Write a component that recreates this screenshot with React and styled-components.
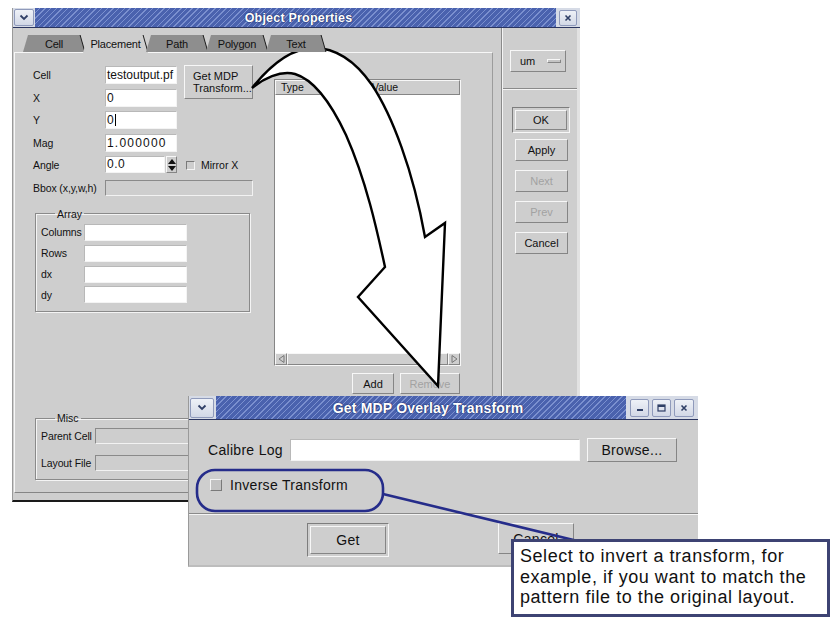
import React from 'react';
import styled, { createGlobalStyle, css } from 'styled-components';

const GlobalStyle = createGlobalStyle`
  html, body {
    margin: 0;
    padding: 0;
    background: #ffffff;
  }
  body {
    font-family: "Liberation Sans", Arial, sans-serif;
  }
`;

const raised = css`
  border: 1px solid;
  border-color: #f7f7f7 #858585 #858585 #f7f7f7;
`;

const sunken = css`
  border: 1px solid;
  border-color: #858585 #f7f7f7 #f7f7f7 #858585;
`;

const Canvas = styled.div`
  position: relative;
  width: 840px;
  height: 632px;
  overflow: hidden;
  background: #ffffff;
`;

/* windows sit on the canvas like windows on a desktop */
const Window = styled.div`
  position: absolute;
  left: ${p => p.$x}px;
  top: ${p => p.$y}px;
  width: ${p => p.$w}px;
  height: ${p => p.$h}px;
  box-sizing: border-box;
  background: #cecece;
  display: flex;
  flex-direction: column;
  color: #111;
  font-size: ${p => p.$font}px;
  letter-spacing: ${p => p.$spacing || 0}px;
  border-left: 1px solid #9a9a9a;
  border-bottom: 2px solid ${p => p.$edge || '#9a9a9a'};
`;

const TitleBar = styled.div`
  flex: none;
  height: ${p => p.$h}px;
  display: flex;
  align-items: center;
  background: #d6dbe6;
  border-bottom: 1px solid #2a3560;
`;

const Hatch = styled.div`
  flex: 1;
  align-self: stretch;
  display: flex;
  align-items: center;
  justify-content: center;
  margin-left: ${p => p.$ml || 0}px;
  margin-right: ${p => p.$mr || 0}px;
  background: repeating-linear-gradient(135deg, #4a62ae 0 3px, #7b90cf 3px 4px);
`;

const Title = styled.span`
  color: #ffffff;
  font-weight: bold;
  font-size: ${p => p.$size}px;
  letter-spacing: 0.2px;
  text-shadow: 0 0 2px #1d2b66, 0 0 1px #1d2b66;
  margin-left: ${p => p.$offset || 0}px;
`;

const TitleButton = styled.div`
  flex: none;
  width: ${p => p.$w}px;
  height: ${p => p.$h}px;
  margin-left: ${p => p.$ml || 0}px;
  box-sizing: border-box;
  display: flex;
  align-items: center;
  justify-content: center;
  background: linear-gradient(#eef1f7, #d2d8e6);
  border: 1px solid #8f9abb;
  border-radius: 2px;
`;

const Chevron = () => (
  <svg width="10" height="7" viewBox="0 0 10 7">
    <polyline points="1.5,1.5 5,5 8.5,1.5" fill="none" stroke="#2f3f66" strokeWidth="1.8" />
  </svg>
);

const CloseGlyph = () => (
  <svg width="8" height="8" viewBox="0 0 8 8">
    <path d="M1.5 1.5 L6.5 6.5 M6.5 1.5 L1.5 6.5" stroke="#2f3f66" strokeWidth="1.6" />
  </svg>
);

const MinGlyph = () => (
  <svg width="8" height="8" viewBox="0 0 8 8">
    <rect x="1" y="5" width="6" height="2" fill="#2f3f66" />
  </svg>
);

const MaxGlyph = () => (
  <svg width="9" height="8" viewBox="0 0 9 8">
    <rect x="1" y="1" width="7" height="6" fill="none" stroke="#2f3f66" strokeWidth="1.2" />
    <rect x="1" y="1" width="7" height="2" fill="#2f3f66" />
  </svg>
);

/* ---------- main window ---------- */

const MainBody = styled.div`
  flex: 1;
  display: flex;
  min-height: 0;
`;

const LeftArea = styled.div`
  width: 480px;
  display: flex;
  flex-direction: column;
  padding: 7px 0 7px 1px;
  box-sizing: border-box;
`;

const Tabs = styled.div`
  display: flex;
  height: 17px;
  padding-left: 9px;
  position: relative;
  z-index: 1;
`;

const Tab = styled.div`
  position: relative;
  width: ${p => p.$w}px;
  height: ${p => (p.$active ? 18 : 17)}px;
  margin-right: -2px;
  display: flex;
  align-items: center;
  justify-content: center;
  font-size: 11px;
  letter-spacing: -0.2px;
  color: #111;

  &::before {
    content: '';
    position: absolute;
    inset: 0;
    background: ${p => (p.$active ? '#cecece' : '#8e8e8e')};
    clip-path: polygon(5px 0, calc(100% - 5px) 0, 100% 100%, 0 100%);
  }

  &::after {
    content: '';
    position: absolute;
    right: 2px;
    top: 0;
    height: 17px;
    width: 1.4px;
    background: #1e1e1e;
    transform: skewX(16deg);
  }

  span {
    position: relative;
  }
`;

const Panel = styled.div`
  flex: 1;
  display: flex;
  ${raised};
  border-right-color: #9c9c9c;
  padding-top: 13px;
  min-height: 0;
`;

const FormCol = styled.div`
  width: 241px;
  padding: 0 0 12px 18px;
  display: flex;
  flex-direction: column;
`;

const FormGrid = styled.div`
  display: grid;
  grid-template-columns: 72px 72px 7px 69px;
  grid-auto-rows: 18px;
  row-gap: 4.6px;
  align-items: center;
`;

const Label = styled.div`
  font-size: 10.5px;
  letter-spacing: -0.1px;
  white-space: nowrap;
  grid-column: ${p => p.$col || 'auto'};
`;

const Input = styled.div`
  box-sizing: border-box;
  height: ${p => p.$h || 18}px;
  width: ${p => (p.$w ? `${p.$w}px` : 'auto')};
  background: ${p => (p.$disabled ? '#cecece' : '#ffffff')};
  ${sunken};
  border-color: ${p => (p.$disabled ? '#8a8a8a #f2f2f2 #f2f2f2 #8a8a8a' : '#b8b8b8 #f4f4f4 #f4f4f4 #b8b8b8')};
  font-size: 12px;
  letter-spacing: ${p => p.$track ?? 0.5}px;
  line-height: ${p => (p.$h || 18) - 2}px;
  padding-left: 1px;
  white-space: nowrap;
  overflow: hidden;
  grid-column: ${p => p.$span || 'auto'};
`;

const Caret = styled.span`
  display: inline-block;
  width: 1px;
  height: 12px;
  background: #000;
  vertical-align: -2px;
  margin-left: 1px;
`;

const Button = styled.div`
  box-sizing: border-box;
  width: ${p => p.$w}px;
  height: ${p => p.$h}px;
  ${raised};
  display: flex;
  align-items: center;
  justify-content: ${p => (p.$left ? 'flex-start' : 'center')};
  text-align: left;
  padding-left: ${p => (p.$left ? 8 : 0)}px;
  font-size: ${p => p.$size || 11}px;
  line-height: 12px;
  color: ${p => (p.$disabled ? '#a2a2a2' : '#111')};
  background: #cecece;
  flex: none;
`;

const GetMdpButton = styled(Button)`
  grid-column: 4;
  grid-row: 1 / span 2;
  align-self: start;
  margin-top: -1px;
`;

const AngleCell = styled.div`
  grid-column: 2;
  display: flex;
  height: 18px;
`;

const Spinner = styled.div`
  width: 11px;
  height: 17px;
  margin-left: 1px;
  display: flex;
  flex-direction: column;
  ${raised};
  box-sizing: border-box;
  align-items: center;
  justify-content: space-around;
`;

const MirrorCell = styled.div`
  grid-column: 4;
  display: flex;
  align-items: center;
  padding-left: 2px;
  gap: 6px;
  font-size: 10.5px;
`;

const CheckBox = styled.div`
  flex: none;
  width: ${p => p.$size}px;
  height: ${p => p.$size}px;
  box-sizing: border-box;
  background: ${p => p.$fill || '#cecece'};
  border: 1px solid;
  border-color: ${p => (p.$up ? '#f4f4f4 #7a7a7a #7a7a7a #f4f4f4' : '#7a7a7a #f4f4f4 #f4f4f4 #7a7a7a')};
`;

const Group = styled.fieldset`
  margin: ${p => p.$mt || '0'} 0 0 2px;
  width: 215px;
  box-sizing: border-box;
  min-inline-size: 0;
  padding: 3px 0 ${p => p.$pb}px 5px;
  border: 1px solid #8a8a8a;
  box-shadow: inset 1px 1px 0 #f4f4f4, 1px 1px 0 #f4f4f4;

  legend {
    margin-left: 14px;
    padding: 0 2px;
    font-size: 10.5px;
    line-height: 14px;
  }
`;

const GroupGrid = styled.div`
  display: grid;
  grid-template-columns: ${p => p.$cols};
  grid-auto-rows: ${p => p.$row}px;
  row-gap: ${p => p.$gap}px;
  align-items: center;
`;

const TableCol = styled.div`
  width: 187px;
  padding-top: 13px;
  display: flex;
  flex-direction: column;
`;

const Table = styled.div`
  height: 287px;
  box-sizing: border-box;
  ${sunken};
  display: flex;
  flex-direction: column;
  background: #ffffff;
`;

const TableHead = styled.div`
  display: flex;
  height: 15px;
  flex: none;
`;

const HeadCell = styled.div`
  box-sizing: border-box;
  width: ${p => (p.$w ? `${p.$w}px` : 'auto')};
  flex: ${p => (p.$w ? 'none' : 1)};
  ${raised};
  background: #cecece;
  font-size: 10.5px;
  line-height: 13px;
  padding-left: 5px;
`;

const TableBody = styled.div`
  flex: 1;
  background: #ffffff;
`;

const ScrollBar = styled.div`
  height: 12px;
  flex: none;
  display: flex;
  background: #bdbdbd;
`;

const ScrollArrow = styled.div`
  width: 12px;
  height: 12px;
  box-sizing: border-box;
  ${raised};
  background: #cecece;
  display: flex;
  align-items: center;
  justify-content: center;
`;

const ScrollThumb = styled.div`
  flex: 1;
  ${raised};
  background: #cecece;
`;

const ButtonRow = styled.div`
  display: flex;
  justify-content: flex-end;
  gap: 6px;
  margin-top: 7px;
  padding-right: 1px;
`;

const Divider = styled.div`
  width: 10px;
  display: flex;
  justify-content: flex-end;

  &::after {
    content: '';
    width: 1px;
    border-left: 1px solid #8a8a8a;
    background: #f4f4f4;
  }
`;

const RightCol = styled.div`
  flex: 1;
  display: flex;
  flex-direction: column;
  padding-top: 22px;
  border-right: 3px solid #e2e2e2;
`;

const OptionMenu = styled.div`
  margin-left: 7px;
  width: 56px;
  height: 22px;
  box-sizing: border-box;
  ${raised};
  display: flex;
  align-items: center;
  padding-left: 9px;
  font-size: 11px;
`;

const OptionMark = styled.div`
  margin-left: auto;
  margin-right: 4px;
  width: 14px;
  height: 4px;
  box-sizing: border-box;
  ${raised};
  background: #c4c4c4;
`;

const HLine = styled.div`
  height: 0;
  border-top: 1px solid #8a8a8a;
  border-bottom: 1px solid #f4f4f4;
  margin-top: ${p => p.$mt}px;
`;

const DefaultRing = styled.div`
  margin: ${p => p.$m};
  width: ${p => p.$w}px;
  height: ${p => p.$h}px;
  box-sizing: border-box;
  ${sunken};
  border-color: #7d7d7d #f7f7f7 #f7f7f7 #7d7d7d;
  padding: 2px;
  display: flex;
`;

const SideButtons = styled.div`
  display: flex;
  flex-direction: column;
  gap: 9px;
  margin: 6px 0 0 12px;
`;

/* ---------- transform dialog ---------- */

const DialogRow = styled.div`
  display: flex;
  align-items: center;
  padding: ${p => p.$pad};
`;

const DialogLabel = styled.div`
  width: ${p => p.$w}px;
  flex: none;
`;

const DialogFooter = styled.div`
  flex: 1;
  display: flex;
  align-items: flex-start;
  padding: 8px 0 0 118px;
  gap: 109px;
`;

/* ---------- annotations ---------- */

const Overlay = styled.svg`
  position: absolute;
  left: 0;
  top: 0;
  pointer-events: none;
`;

const Callout = styled.div`
  position: absolute;
  left: 511px;
  top: 539px;
  width: 319px;
  height: 78px;
  box-sizing: border-box;
  background: #ffffff;
  border: 3px solid #3d4373;
  padding: 4px 0 0 6px;
  font-family: "Liberation Sans", Arial, sans-serif;
  font-size: 18px;
  letter-spacing: 0.55px;
  line-height: 20.5px;
  color: #111;
`;

const TriLeft = () => (
  <svg width="7" height="8" viewBox="0 0 7 8">
    <polygon points="6,0.5 6,7.5 1,4" fill="none" stroke="#777" strokeWidth="1" />
  </svg>
);

const TriRight = () => (
  <svg width="7" height="8" viewBox="0 0 7 8">
    <polygon points="1,0.5 1,7.5 6,4" fill="none" stroke="#777" strokeWidth="1" />
  </svg>
);

const SpinUp = () => (
  <svg width="8" height="5" viewBox="0 0 8 5"><polygon points="0,5 8,5 4,0" fill="#111" /></svg>
);

const SpinDown = () => (
  <svg width="8" height="5" viewBox="0 0 8 5"><polygon points="0,0 8,0 4,5" fill="#111" /></svg>
);

const tabs = [
  { name: 'Cell', w: 62 },
  { name: 'Placement', w: 65, active: true },
  { name: 'Path', w: 62 },
  { name: 'Polygon', w: 62 },
  { name: 'Text', w: 60 },
];

const fields = [
  { label: 'Cell', value: 'testoutput.pf', track: 0 },
  { label: 'X', value: '0' },
  { label: 'Y', value: '0', caret: true },
  { label: 'Mag', value: '1.000000', track: 1.2 },
];

const arrayRows = ['Columns', 'Rows', 'dx', 'dy'];

const sideButtons = [
  { label: 'Apply' },
  { label: 'Next', disabled: true },
  { label: 'Prev', disabled: true },
  { label: 'Cancel' },
];

const ObjectProperties = () => (
  <Window $x={12} $y={8} $w={568} $h={494} $font={11} $edge="#1a1a1a">
    <TitleBar $h={19}>
      <TitleButton $w={20} $h={17} $ml={1}><Chevron /></TitleButton>
      <Hatch $ml={1} $mr={3}>
        <Title $size={12.5} $offset={6}>Object Properties</Title>
      </Hatch>
      <TitleButton $w={18} $h={16}><CloseGlyph /></TitleButton>
      <div style={{ width: 3 }} />
    </TitleBar>
    <MainBody>
      <LeftArea>
        <Tabs>
          {tabs.map(t => (
            <Tab key={t.name} $w={t.w} $active={t.active}><span>{t.name}</span></Tab>
          ))}
        </Tabs>
        <Panel>
          <FormCol>
            <FormGrid>
              {fields.map((f, i) => (
                <React.Fragment key={f.label}>
                  <Label $col={1}>{f.label}</Label>
                  <Input $span={2} $track={f.track}>{f.value}{f.caret && <Caret />}</Input>
                  {i === 0 && (
                    <GetMdpButton $w={69} $h={34} $left>Get MDP<br />Transform...</GetMdpButton>
                  )}
                </React.Fragment>
              ))}
              <Label $col={1}>Angle</Label>
              <AngleCell>
                <Input $w={60} $h={17}>0.0</Input>
                <Spinner><SpinUp /><SpinDown /></Spinner>
              </AngleCell>
              <MirrorCell>
                <CheckBox $size={9} />
                Mirror X
              </MirrorCell>
              <Label $col={1}>Bbox (x,y,w,h)</Label>
              <Input $span="2 / span 3" $h={16} $disabled />
            </FormGrid>

            <Group $mt="10px" $pb={8}>
              <legend>Array</legend>
              <GroupGrid $cols="43px 103px" $row={17} $gap={3.8}>
                {arrayRows.map(r => (
                  <React.Fragment key={r}>
                    <Label>{r}</Label>
                    <Input $h={17} />
                  </React.Fragment>
                ))}
              </GroupGrid>
            </Group>

            <Group $mt="auto" $pb={8}>
              <legend>Misc</legend>
              <GroupGrid $cols="54px 150px" $row={16} $gap={11}>
                <Label>Parent Cell</Label>
                <Input $h={16} $disabled />
                <Label>Layout File</Label>
                <Input $h={16} $disabled />
              </GroupGrid>
            </Group>
          </FormCol>

          <TableCol>
            <Table>
              <TableHead>
                <HeadCell $w={91}>Type</HeadCell>
                <HeadCell>Value</HeadCell>
              </TableHead>
              <TableBody />
              <ScrollBar>
                <ScrollArrow><TriLeft /></ScrollArrow>
                <ScrollThumb />
                <ScrollArrow><TriRight /></ScrollArrow>
              </ScrollBar>
            </Table>
            <ButtonRow>
              <Button $w={42} $h={21}>Add</Button>
              <Button $w={60} $h={21} $disabled>Remove</Button>
            </ButtonRow>
          </TableCol>
        </Panel>
      </LeftArea>
      <Divider />
      <RightCol>
        <OptionMenu>
          um
          <OptionMark />
        </OptionMenu>
        <HLine $mt={16} />
        <DefaultRing $m="17px 0 0 9px" $w={58} $h={26}>
          <Button $w={52} $h={20}>OK</Button>
        </DefaultRing>
        <SideButtons>
          {sideButtons.map(b => (
            <Button key={b.label} $w={53} $h={22} $disabled={b.disabled}>{b.label}</Button>
          ))}
        </SideButtons>
      </RightCol>
    </MainBody>
  </Window>
);

const TransformDialog = () => (
  <Window $x={188} $y={396} $w={510} $h={171} $font={14} $spacing={0.3} $edge="#bdbdbd">
    <TitleBar $h={23}>
      <TitleButton $w={24} $h={20} $ml={1}><Chevron /></TitleButton>
      <Hatch $ml={2} $mr={4}>
        <Title $size={14} $offset={14}>Get MDP Overlay Transform</Title>
      </Hatch>
      <TitleButton $w={19} $h={18}><MinGlyph /></TitleButton>
      <TitleButton $w={19} $h={18} $ml={3}><MaxGlyph /></TitleButton>
      <TitleButton $w={20} $h={18} $ml={3}><CloseGlyph /></TitleButton>
      <div style={{ width: 4 }} />
    </TitleBar>
    <DialogRow $pad="18px 0 0 19px">
      <DialogLabel $w={82}>Calibre Log</DialogLabel>
      <Input $w={290} $h={22} />
      <Button $w={90} $h={24} $size={14} style={{ marginLeft: 7 }}>Browse...</Button>
    </DialogRow>
    <DialogRow $pad="15px 0 0 21px">
      <CheckBox $size={12} $up $fill="#c2c2c2" />
      <span style={{ marginLeft: 8 }}>Inverse Transform</span>
    </DialogRow>
    <HLine $mt={20} />
    <DialogFooter>
      <DefaultRing $m="0" $w={82} $h={34}>
        <Button $w={76} $h={28} $size={14}>Get</Button>
      </DefaultRing>
      <Button $w={76} $h={31} $size={14}>Cancel</Button>
    </DialogFooter>
  </Window>
);

const Arrow = () => (
  <Overlay width="840" height="632" viewBox="0 0 840 632">
    <path
      d="M252 88 C268 68 290 48 314 48 C338 48 356 62 372 85 C392 115 413 170 425 237 L445 223 L438 386 L358 297 L385 267 C377 230 366 180 346 135 C331 103 315 80 295 74 C280 70 263 79 252 88 Z"
      fill="#ffffff"
      stroke="#000000"
      strokeWidth="2.4"
      strokeLinejoin="miter"
    />
  </Overlay>
);

const Highlight = () => (
  <Overlay width="840" height="632" viewBox="0 0 840 632">
    <rect x="197" y="470" width="186" height="41" rx="18" ry="18" fill="none" stroke="#252c8a" strokeWidth="2.6" />
    <line x1="383" y1="494" x2="590" y2="544" stroke="#252c8a" strokeWidth="2.6" />
  </Overlay>
);

const App = () => (
  <>
    <GlobalStyle />
    <Canvas>
      <ObjectProperties />
      <Arrow />
      <TransformDialog />
      <Highlight />
      <Callout>
        Select to invert a transform, for<br />
        example, if you want to match the<br />
        pattern file to the original layout.
      </Callout>
    </Canvas>
  </>
);

export default App;
